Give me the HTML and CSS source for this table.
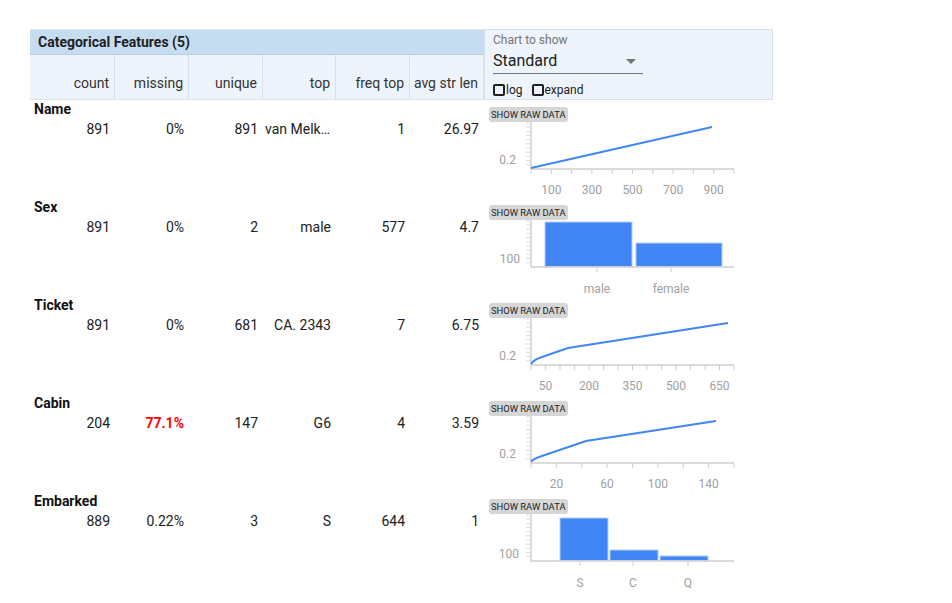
FILE: index.html
```html
<!DOCTYPE html>
<html>
<head>
<meta charset="utf-8">
<link rel="stylesheet" href="styles.css">
</head>
<body>
<div class="wrap">
  <div class="head">
    <div class="head-left">
      <div class="title">Categorical Features (5)</div>
      <div class="cols">
        <div class="hc">count</div>
        <div class="hc">missing</div>
        <div class="hc">unique</div>
        <div class="hc">top</div>
        <div class="hc">freq top</div>
        <div class="hc">avg str len</div>
      </div>
    </div>
    <div class="panel">
      <div class="plabel">Chart to show</div>
      <div class="select"><span>Standard</span><span class="arrow"></span></div>
      <div class="checks">
        <span class="cb"></span><span class="cbl">log</span>
        <span class="cb cb2"></span><span class="cbl">expand</span>
      </div>
    </div>
  </div>

  <div class="row">
    <div class="data">
      <div class="fname">Name</div>
      <div class="vals">
        <div class="v">891</div><div class="v">0%</div><div class="v">891</div>
        <div class="v top trunc">van Melk…</div><div class="v">1</div><div class="v">26.97</div>
      </div>
    </div>
    <div class="chart">
      <div class="raw">SHOW RAW DATA</div>
      <svg class="svg" width="289" height="76" viewBox="0 0 289 76">
        <path class="yt" d="M42 42.8H47M42 38.6H47M42 34.4H47M42 30.2H47M42 26H47M42 21.8H47M42 17.6H47M42 13.4H47M42 9.2H47M42 5H47M42 0.8H47"/>
        <path class="ax" d="M47 0.5V47H250"/>
        <path class="xt" d="M47 47V52M67.3 47V52M87.6 47V52M107.9 47V52M128.2 47V52M148.5 47V52M168.8 47V52M189.1 47V52M209.4 47V52M229.7 47V52M250 47V52"/>
        <text class="yl" x="32" y="42">0.2</text>
        <text class="xl" x="67.3" y="72">100</text>
        <text class="xl" x="107.9" y="72">300</text>
        <text class="xl" x="148.5" y="72">500</text>
        <text class="xl" x="189.1" y="72">700</text>
        <text class="xl" x="229.7" y="72">900</text>
        <path class="ln" d="M47 46L228 5"/>
      </svg>
    </div>
  </div>

  <div class="row">
    <div class="data">
      <div class="fname">Sex</div>
      <div class="vals">
        <div class="v">891</div><div class="v">0%</div><div class="v">2</div>
        <div class="v top">male</div><div class="v">577</div><div class="v">4.7</div>
      </div>
    </div>
    <div class="chart">
      <div class="raw">SHOW RAW DATA</div>
      <svg class="svg" width="289" height="76" viewBox="0 0 289 76">
        <path class="yt" d="M42 42.8H47M42 38.6H47M42 34.4H47M42 30.2H47M42 26H47M42 21.8H47M42 17.6H47M42 13.4H47M42 9.2H47M42 5H47M42 0.8H47"/>
        <rect class="bar" x="61" y="2" width="87" height="44.5"/>
        <rect class="bar" x="152" y="23" width="86" height="23.5"/>
        <path class="ax" d="M47 0.5V47H250"/>
        <path class="xt" d="M113 47V52M187 47V52"/>
        <text class="yl" x="36" y="43">100</text>
        <text class="xl" x="113" y="73">male</text>
        <text class="xl" x="187" y="73">female</text>
      </svg>
    </div>
  </div>

  <div class="row">
    <div class="data">
      <div class="fname">Ticket</div>
      <div class="vals">
        <div class="v">891</div><div class="v">0%</div><div class="v">681</div>
        <div class="v top">CA. 2343</div><div class="v">7</div><div class="v">6.75</div>
      </div>
    </div>
    <div class="chart">
      <div class="raw">SHOW RAW DATA</div>
      <svg class="svg" width="289" height="76" viewBox="0 0 289 76">
        <path class="yt" d="M42 42.8H47M42 38.6H47M42 34.4H47M42 30.2H47M42 26H47M42 21.8H47M42 17.6H47M42 13.4H47M42 9.2H47M42 5H47M42 0.8H47"/>
        <path class="ax" d="M47 0.5V47H250"/>
        <path class="xt" d="M47 47V52M61.5 47V52M76 47V52M90.5 47V52M105 47V52M119.5 47V52M134 47V52M148.5 47V52M163 47V52M177.5 47V52M192 47V52M206.5 47V52M221 47V52M235.5 47V52M250 47V52"/>
        <text class="yl" x="32" y="42">0.2</text>
        <text class="xl" x="61.5" y="72">50</text>
        <text class="xl" x="105" y="72">200</text>
        <text class="xl" x="148.5" y="72">350</text>
        <text class="xl" x="192" y="72">500</text>
        <text class="xl" x="235.5" y="72">650</text>
        <path class="ln" d="M47 46C49 43 53 40.5 58 39L84 30L244 5"/>
      </svg>
    </div>
  </div>

  <div class="row">
    <div class="data">
      <div class="fname">Cabin</div>
      <div class="vals">
        <div class="v">204</div><div class="v red">77.1%</div><div class="v">147</div>
        <div class="v top">G6</div><div class="v">4</div><div class="v">3.59</div>
      </div>
    </div>
    <div class="chart">
      <div class="raw">SHOW RAW DATA</div>
      <svg class="svg" width="289" height="76" viewBox="0 0 289 76">
        <path class="yt" d="M42 42.8H47M42 38.6H47M42 34.4H47M42 30.2H47M42 26H47M42 21.8H47M42 17.6H47M42 13.4H47M42 9.2H47M42 5H47M42 0.8H47"/>
        <path class="ax" d="M47 0.5V47H250"/>
        <path class="xt" d="M47 47V52M72.4 47V52M97.75 47V52M123.1 47V52M148.5 47V52M173.9 47V52M199.25 47V52M224.6 47V52M250 47V52"/>
        <text class="yl" x="32" y="42">0.2</text>
        <text class="xl" x="72.4" y="72">20</text>
        <text class="xl" x="123.1" y="72">60</text>
        <text class="xl" x="173.9" y="72">100</text>
        <text class="xl" x="224.6" y="72">140</text>
        <path class="ln" d="M47 45.5C49 43.5 51.5 42 55 41L102 25L232 5"/>
      </svg>
    </div>
  </div>

  <div class="row">
    <div class="data">
      <div class="fname">Embarked</div>
      <div class="vals">
        <div class="v">889</div><div class="v">0.22%</div><div class="v">3</div>
        <div class="v top">S</div><div class="v">644</div><div class="v">1</div>
      </div>
    </div>
    <div class="chart">
      <div class="raw">SHOW RAW DATA</div>
      <svg class="svg" width="289" height="76" viewBox="0 0 289 76">
        <path class="yt" d="M42 42.8H47M42 38.6H47M42 34.4H47M42 30.2H47M42 26H47M42 21.8H47M42 17.6H47M42 13.4H47M42 9.2H47M42 5H47M42 0.8H47"/>
        <rect class="bar" x="76" y="4" width="48" height="42.5"/>
        <rect class="bar" x="126" y="36" width="48" height="10.5"/>
        <rect class="bar" x="176" y="42" width="48" height="4.5"/>
        <path class="ax" d="M47 0.5V47H250"/>
        <path class="xt" d="M96 47V52M149 47V52M204 47V52"/>
        <text class="yl" x="35" y="44">100</text>
        <text class="xl" x="96" y="73">S</text>
        <text class="xl" x="149" y="73">C</text>
        <text class="xl" x="204" y="73">Q</text>
      </svg>
    </div>
  </div>
</div>
</body>
</html>
```

FILE: styles.css
```css
html, body {
  margin: 0;
  padding: 0;
  background: #ffffff;
}
body {
  font-family: Roboto, "Liberation Sans", Arial, sans-serif;
  color: #212121;
}
.wrap {
  padding: 29px 0 0 30px;
  width: 743px;
}
.head {
  display: grid;
  grid-template-columns: 454px 289px;
  height: 71px;
}
.head-left {
  display: flex;
  flex-direction: column;
  border-top: 1px solid #dbe4ee;
}
.title {
  height: 24px;
  line-height: 24px;
  background: #c6dcf1;
  font-weight: 700;
  font-size: 14px;
  padding-left: 8px;
  color: #212121;
  border-bottom: 1px solid #b7cfe6;
}
.cols {
  flex: 1;
  display: grid;
  grid-template-columns: 85px 74px 74px 73px 74px 74px;
  background: #edf4fb;
  border-bottom: 1px solid #dbe4ee;
}
.hc {
  display: flex;
  align-items: flex-end;
  justify-content: flex-end;
  padding: 0 5px 8px 0;
  font-size: 14px;
  color: #333;
  border-right: 1px solid #d5e1ec;
}
.panel {
  background: #edf4fb;
  border: 1px solid #d7e1eb;
  padding: 3px 0 0 8px;
  display: flex;
  flex-direction: column;
}
.plabel {
  font-size: 12px;
  color: #757575;
  line-height: 14px;
}
.select {
  width: 150px;
  height: 24px;
  margin-top: 2px;
  border-bottom: 1px solid #757575;
  font-size: 16px;
  line-height: 22px;
  color: #212121;
  display: flex;
  justify-content: space-between;
  align-items: center;
}
.arrow {
  width: 0;
  height: 0;
  border-left: 5px solid transparent;
  border-right: 5px solid transparent;
  border-top: 5px solid #757575;
  margin-right: 7px;
}
.checks {
  display: flex;
  align-items: center;
  margin-top: 9px;
  font-size: 12px;
  color: #212121;
}
.cb {
  width: 8px;
  height: 8px;
  border: 2px solid #222;
  border-radius: 2px;
  margin-right: 1px;
}
.cb2 {
  margin-left: 9px;
}
.row {
  display: grid;
  grid-template-columns: 454px 289px;
  height: 98px;
}
.fname {
  font-weight: 700;
  font-size: 14px;
  line-height: 18px;
  padding-left: 4px;
  color: #111;
}
.vals {
  display: grid;
  grid-template-columns: 85px 74px 74px 73px 74px 74px;
  font-size: 14px;
  line-height: 22px;
  color: #212121;
}
.v {
  text-align: right;
  padding-right: 5px;
  white-space: nowrap;
}
.top {
  overflow: hidden;
  text-overflow: ellipsis;
  padding-left: 2px;
}
.trunc {
  text-align: left;
}
.red {
  color: #ff0000;
  font-weight: 700;
}
.chart {
  padding-top: 7px;
  display: flex;
  flex-direction: column;
}
.raw {
  align-self: flex-start;
  margin-left: 5px;
  height: 15px;
  line-height: 15px;
  padding: 0 2px;
  width: 75px;
  background: #d6d6d6;
  border-radius: 3px;
  font-size: 9.4px;
  color: #222;
  white-space: nowrap;
}
.svg {
  display: block;
}
.yt {
  stroke: #dddddd;
  stroke-width: 1;
  fill: none;
}
.ax {
  stroke: #cfcfcf;
  stroke-width: 1.5;
  fill: none;
}
.xt {
  stroke: #cfcfcf;
  stroke-width: 1;
  fill: none;
}
.yl {
  font-family: Roboto, "Liberation Sans", sans-serif;
  font-size: 12px;
  fill: #a0a0a0;
  text-anchor: end;
}
.xl {
  font-family: Roboto, "Liberation Sans", sans-serif;
  font-size: 12px;
  fill: #a0a0a0;
  text-anchor: middle;
}
.ln {
  stroke: #4285f4;
  stroke-width: 2;
  fill: none;
}
.bar {
  fill: #4285f4;
  stroke: #b3cffa;
  stroke-width: 1;
}
```
